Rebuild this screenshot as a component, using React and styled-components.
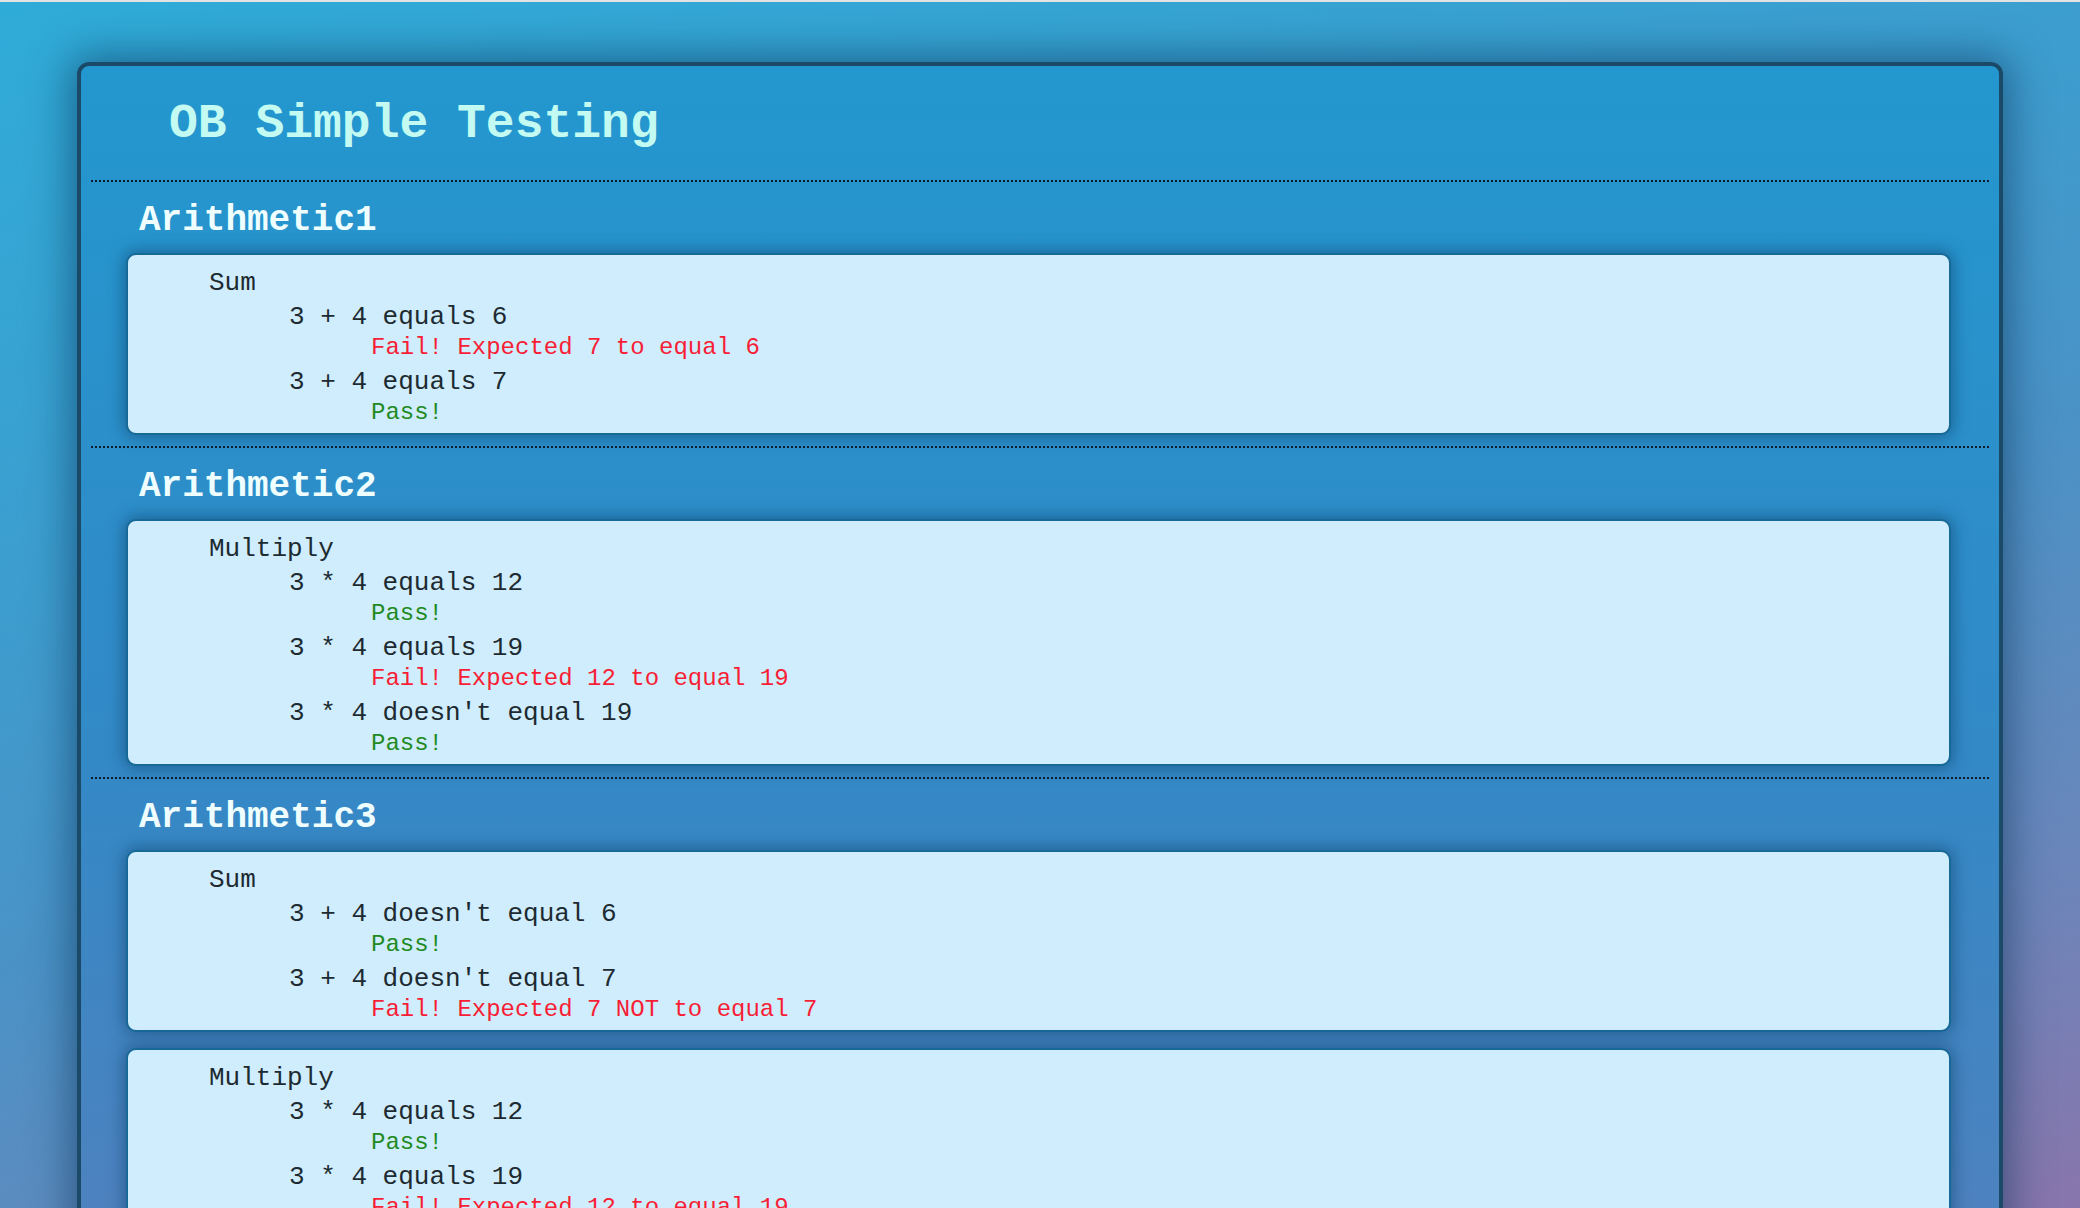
import styled, { createGlobalStyle } from "styled-components";

const suites = [
  {
    name: "Arithmetic1",
    blocks: [
      {
        title: "Sum",
        tests: [
          { name: "3 + 4 equals 6", pass: false, msg: "Fail! Expected 7 to equal 6" },
          { name: "3 + 4 equals 7", pass: true },
        ],
      },
    ],
  },
  {
    name: "Arithmetic2",
    blocks: [
      {
        title: "Multiply",
        tests: [
          { name: "3 * 4 equals 12", pass: true },
          { name: "3 * 4 equals 19", pass: false, msg: "Fail! Expected 12 to equal 19" },
          { name: "3 * 4 doesn't equal 19", pass: true },
        ],
      },
    ],
  },
  {
    name: "Arithmetic3",
    blocks: [
      {
        title: "Sum",
        tests: [
          { name: "3 + 4 doesn't equal 6", pass: true },
          { name: "3 + 4 doesn't equal 7", pass: false, msg: "Fail! Expected 7 NOT to equal 7" },
        ],
      },
      {
        title: "Multiply",
        tests: [
          { name: "3 * 4 equals 12", pass: true },
          { name: "3 * 4 equals 19", pass: false, msg: "Fail! Expected 12 to equal 19" },
          { name: "3 * 4 doesn't equal 19", pass: true },
        ],
      },
    ],
  },
];

export default function App() {
  return (
    <>
      <GlobalStyle />
      <Page>
        <Panel>
          <Header>
            <Title>OB Simple Testing</Title>
          </Header>
          {suites.map((suite) => (
            <Suite key={suite.name}>
              <SuiteName>{suite.name}</SuiteName>
              <Blocks>
                {suite.blocks.map((block, i) => (
                  <Card key={i}>
                    <BlockTitle>{block.title}</BlockTitle>
                    {block.tests.map((test, j) => (
                      <Test key={j}>
                        <TestName>{test.name}</TestName>
                        <Result $pass={test.pass}>{test.pass ? "Pass!" : test.msg}</Result>
                      </Test>
                    ))}
                  </Card>
                ))}
              </Blocks>
            </Suite>
          ))}
        </Panel>
      </Page>
    </>
  );
}

// courier-like faces first, Liberation Mono keeps the same widths if none is there
const mono = `"Courier New", "Nimbus Mono PS", "Nimbus Mono L", "FreeMono", "Liberation Mono", monospace`;

const GlobalStyle = createGlobalStyle`
  html, body {
    margin: 0;
    padding: 0;
  }
  body {
    border-top: 2px solid #e3e3e3;
    font-family: ${mono};
  }
`;

const Page = styled.div`
  height: 1206px;
  overflow: hidden;
  background: linear-gradient(165deg, #2fabd8 0%, #3b9fd0 30%, #4a92c6 55%, #6a86ba 80%, #8875ac 100%);
  padding-top: 60px;
  box-sizing: border-box;
`;

const Panel = styled.div`
  width: 1926px;
  margin: 0 auto;
  box-sizing: border-box;
  border: 4px solid #1b4a68;
  border-radius: 12px;
  padding: 0 10px 40px;
  background: linear-gradient(180deg, #2397cf 0px, #3389c6 700px, #4d82bf 1150px);
  box-shadow: 0 0 40px 6px rgba(10, 50, 85, 0.55);
`;

const Header = styled.div`
  padding: 31px 0 29px 78px;
  border-bottom: 2px dotted #0d1d2a;
`;

const Title = styled.h1`
  margin: 0;
  font-size: 48px;
  line-height: 54px;
  font-weight: bold;
  color: #c3faf2;
`;

const Suite = styled.section`
  padding: 17px 38px 11px 35px;
  border-bottom: 2px dotted #0d1d2a;
`;

const SuiteName = styled.h2`
  margin: 0 0 10px 13px;
  font-size: 36px;
  line-height: 44px;
  font-weight: bold;
  color: #effefe;
`;

const Blocks = styled.div`
  display: flex;
  flex-direction: column;
  gap: 16px;
`;

const Card = styled.div`
  background: #cfedfc;
  border: 2px solid #176997;
  border-radius: 10px;
  padding: 13px 0 5px 81px;
  box-shadow: 0 0 16px 2px rgba(10, 55, 95, 0.5);
  color: #1d2a31;
`;

const BlockTitle = styled.div`
  font-size: 26px;
  line-height: 30px;
`;

const Test = styled.div`
  margin-top: 4px;
  padding-left: 80px;
`;

const TestName = styled.div`
  font-size: 26px;
  line-height: 30px;
`;

const Result = styled.div`
  padding-left: 82px;
  font-size: 24px;
  line-height: 31px;
  color: ${(p) => (p.$pass ? "#1f8a22" : "#f71e36")};
`;
